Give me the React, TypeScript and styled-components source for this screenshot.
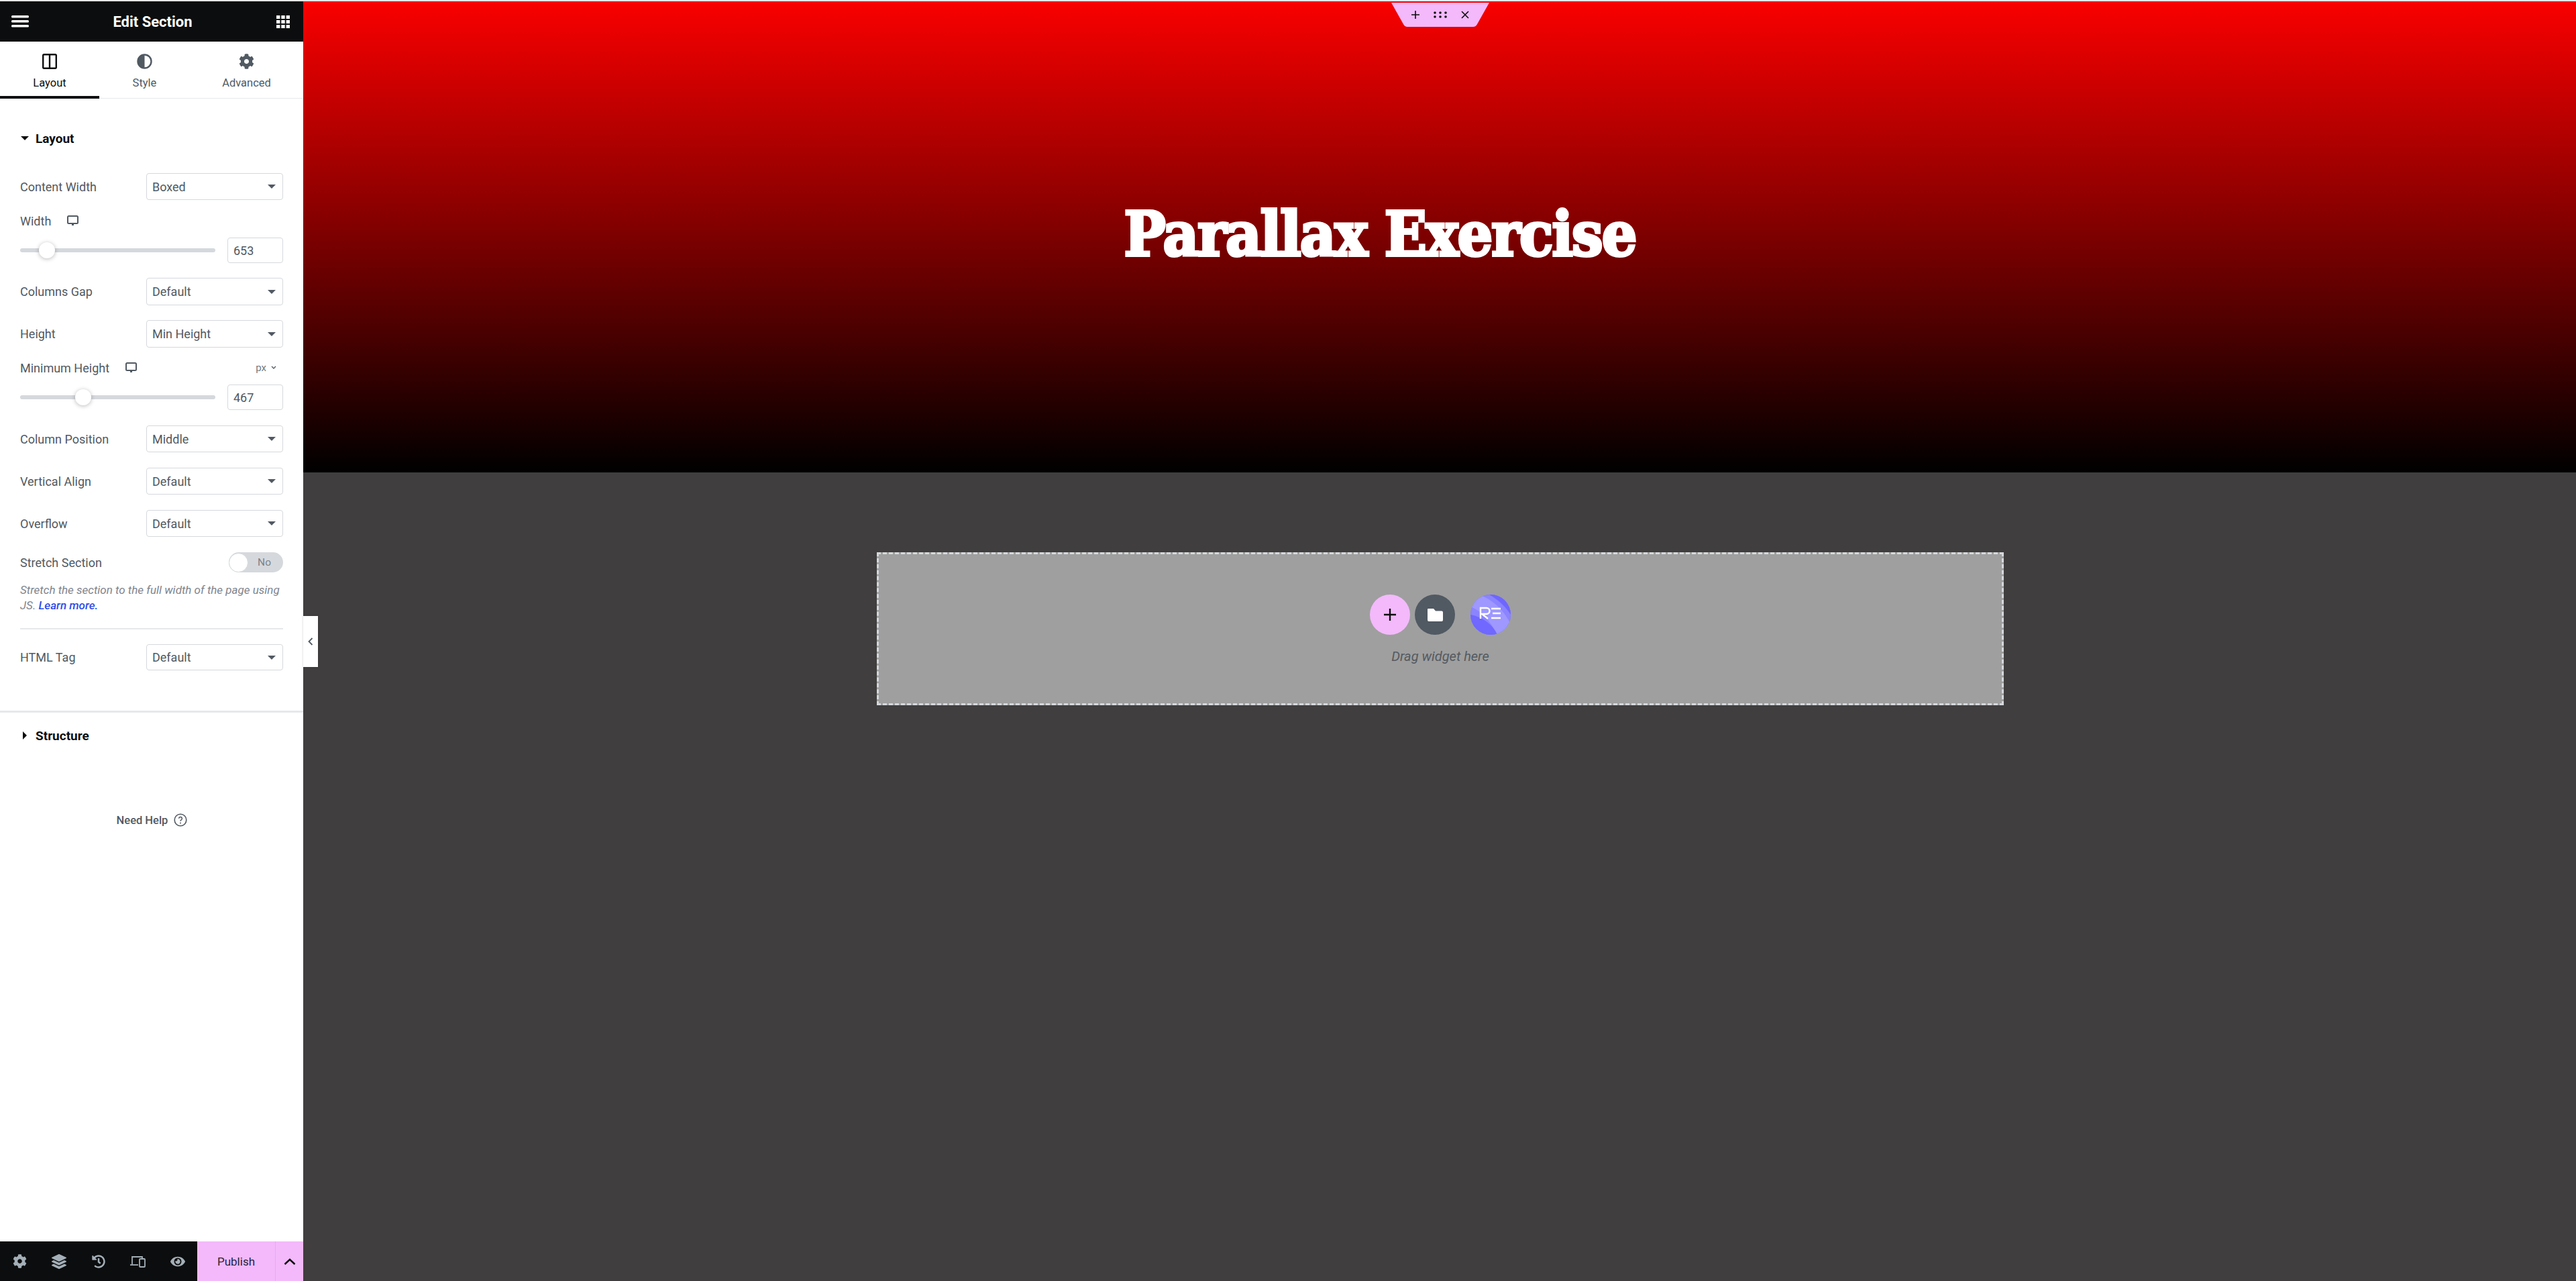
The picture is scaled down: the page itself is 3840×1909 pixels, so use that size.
import React from "react";
import styled, { createGlobalStyle } from "styled-components";
import { FaCog, FaLayerGroup, FaHistory, FaEye } from "react-icons/fa";

const Global = createGlobalStyle`
  html, body { margin: 0; padding: 0; height: 100%; background: #e6e6e6; }
  body { font-family: Roboto, "Liberation Sans", sans-serif; overflow: hidden; }
  #root { height: 100%; }
  * { box-sizing: border-box; }
`;

const Page = styled.div`
  display: flex;
  width: 3840px;
  height: 1909px;
  padding-top: 2px;
`;

const Panel = styled.aside`
  width: 452px;
  flex: none;
  background: #fff;
  display: flex;
  flex-direction: column;
  color: #515962;
`;

const Header = styled.header`
  height: 60px;
  flex: none;
  background: #0c0d0e;
  color: #fff;
  display: flex;
  align-items: center;
  justify-content: space-between;
  padding: 0 20px 0 17px;
`;

const HeaderTitle = styled.h1`
  margin: 0;
  font-size: 22px;
  font-weight: 700;
`;

const Tabs = styled.nav`
  height: 85px;
  flex: none;
  display: flex;
  border-bottom: 1px solid #e6e8ea;
`;

const Tab = styled.div<{ $active?: boolean; $w: number }>`
  width: ${(p) => p.$w}px;
  height: 85px;
  display: flex;
  flex-direction: column;
  align-items: center;
  padding-top: 18px;
  font-size: 16.5px;
  line-height: 20px;
  color: ${(p) => (p.$active ? "#0c0d0e" : "#515962")};
  border-bottom: 4px solid ${(p) => (p.$active ? "#0c0d0e" : "transparent")};
  svg { display: block; margin-bottom: 11px; }
`;

const Body = styled.div`
  flex: 1;
  display: flex;
  flex-direction: column;
`;

const SectionHead = styled.div<{ $top: number }>`
  display: flex;
  align-items: center;
  gap: 10px;
  height: 24px;
  margin: ${(p) => p.$top}px 30px 0 31px;
  font-size: 19px;
  font-weight: 700;
  color: #0c0d0e;
`;

const CaretBox = styled.span`
  width: 12px;
  display: flex;
  justify-content: center;
`;

const CaretDown = styled.i`
  width: 0;
  height: 0;
  border-left: 6px solid transparent;
  border-right: 6px solid transparent;
  border-top: 6px solid #0c0d0e;
`;

const CaretRight = styled.i`
  width: 0;
  height: 0;
  border-top: 6px solid transparent;
  border-bottom: 6px solid transparent;
  border-left: 6px solid #0c0d0e;
`;

const Row = styled.div<{ $top: number; $h: number }>`
  display: flex;
  align-items: center;
  justify-content: space-between;
  height: ${(p) => p.$h}px;
  margin: ${(p) => p.$top}px 30px 0;
  font-size: 18px;
  color: #515962;
`;

const Label = styled.span`
  display: flex;
  align-items: center;
  gap: 24px;
`;

const Select = styled.div`
  position: relative;
  width: 204px;
  height: 100%;
  border: 1px solid #d5d8dc;
  border-radius: 4px;
  display: flex;
  align-items: center;
  padding-left: 8px;
  &::after {
    content: "";
    position: absolute;
    right: 10px;
    top: calc(50% - 3px);
    border-left: 6px solid transparent;
    border-right: 6px solid transparent;
    border-top: 6px solid #515962;
  }
`;

const Track = styled.div`
  position: relative;
  width: 291px;
  height: 6px;
  border-radius: 3px;
  background: #d5d8dc;
`;

const Thumb = styled.div`
  position: absolute;
  top: -9px;
  width: 24px;
  height: 24px;
  border-radius: 50%;
  background: #fff;
  box-shadow: 0 1px 6px rgba(0, 0, 0, 0.28);
`;

const NumberBox = styled.div`
  width: 83px;
  height: 100%;
  border: 1px solid #d5d8dc;
  border-radius: 4px;
  display: flex;
  align-items: center;
  padding-left: 8px;
`;

const Unit = styled.span`
  display: flex;
  align-items: center;
  gap: 7px;
  font-size: 15px;
  color: #717a84;
  margin-right: 10px;
`;

const Toggle = styled.div`
  width: 81px;
  height: 30px;
  border-radius: 15px;
  background: #d5d8dc;
  display: flex;
  align-items: center;
  justify-content: space-between;
  padding-right: 18px;
  font-size: 15.5px;
  color: #7c838c;
`;

const Knob = styled.i`
  width: 29px;
  height: 29px;
  border-radius: 50%;
  background: #fff;
  border: 1px solid #d5d8dc;
`;

const Desc = styled.p`
  margin: 15px 30px 0;
  font-size: 17px;
  line-height: 23px;
  font-style: italic;
  color: #7f858e;
  a { color: #2f4be8; font-weight: 500; text-decoration: none; }
`;

const Rule = styled.hr<{ $top: number; $h: number; $inset: number }>`
  border: 0;
  flex: none;
  height: ${(p) => p.$h}px;
  margin: ${(p) => p.$top}px ${(p) => p.$inset}px 0;
  background: #e6e8ea;
`;

const Help = styled.div`
  margin-top: 102px;
  display: flex;
  align-items: center;
  justify-content: center;
  gap: 9px;
  height: 24px;
  font-size: 16.5px;
  font-weight: 500;
  padding-left: 1px;
`;

const Footer = styled.footer`
  height: 59px;
  flex: none;
  display: flex;
  background: #0c0d0e;
`;

const FootIcons = styled.div`
  width: 294px;
  display: flex;
  align-items: center;
`;

const FootIcon = styled.span`
  width: 58.8px;
  display: flex;
  justify-content: center;
  color: #a4afb7;
`;

const Publish = styled.div`
  width: 117px;
  background: #f3b9fb;
  color: #22253f;
  font-size: 17px;
  display: flex;
  align-items: center;
  justify-content: center;
  border-right: 1px solid #eaa8f3;
`;

const PublishMore = styled.div`
  flex: 1;
  background: #f3b9fb;
  display: flex;
  align-items: center;
  justify-content: center;
`;

const Canvas = styled.main`
  position: relative;
  flex: 1;
  background: #403e3e;
  display: flex;
  flex-direction: column;
`;

const Hero = styled.section`
  height: 702px;
  flex: none;
  background: linear-gradient(180deg, #f90000 0%, #000 100%);
  display: flex;
  align-items: center;
  justify-content: center;
  padding: 0 178px 0 0;
`;

const HeroTitle = styled.h2`
  margin: 0 0 8px;
  color: #fff;
  font-family: "DejaVu Serif Condensed", "DejaVu Serif", serif;
  font-stretch: condensed;
  font-weight: 700;
  font-size: 92px;
  line-height: 1;
  letter-spacing: -1.9px;
  -webkit-text-stroke: 4px #fff;
`;

const SectionTab = styled.div`
  position: absolute;
  top: 2px;
  left: 1622px;
  width: 146px;
  height: 36px;
  display: flex;
  align-items: center;
  justify-content: center;
  gap: 20px;
  color: #0c0d0e;
  svg.bg { position: absolute; inset: 0; }
  svg.ic { position: relative; }
`;

const EmptyBox = styled.section`
  width: 1680px;
  height: 228px;
  margin: 119px 853px 0 855px;
  background: #9f9f9f;
  border: 3px dashed #d5d8dc;
  display: flex;
  flex-direction: column;
  align-items: center;
  padding-top: 60px;
`;

const Buttons = styled.div`
  display: flex;
  align-items: center;
  height: 60px;
`;

const Round = styled.div<{ $bg: string; $gap: number }>`
  width: 60px;
  height: 60px;
  border-radius: 50%;
  background: ${(p) => p.$bg};
  margin-left: ${(p) => p.$gap}px;
  display: flex;
  align-items: center;
  justify-content: center;
  overflow: hidden;
`;

const DragText = styled.div`
  margin-top: 21px;
  font-size: 20px;
  line-height: 22px;
  font-style: italic;
  color: #555a61;
`;

const Collapse = styled.div`
  position: absolute;
  left: 0;
  top: 916px;
  width: 22px;
  height: 76px;
  background: #fff;
  box-shadow: 0 0 3px rgba(0, 0, 0, 0.2);
  display: flex;
  align-items: center;
  justify-content: center;
  color: #515962;
`;

const Desktop = () => (
  <svg width="17" height="16" viewBox="0 0 17 16">
    <rect x="1" y="1" width="15" height="11" rx="1.5" fill="none" stroke="#515962" strokeWidth="2" />
    <rect x="7" y="12" width="3" height="3" fill="#515962" />
  </svg>
);

export default function App() {
  return (
    <Page>
      <Global />
      <Panel>
        <Header>
          <svg width="26" height="18" viewBox="0 0 26 18" fill="#fff">
            <rect y="0" width="26" height="3.4" rx="1.5" />
            <rect y="7" width="26" height="3.4" rx="1.5" />
            <rect y="14" width="26" height="3.4" rx="1.5" />
          </svg>
          <HeaderTitle>Edit Section</HeaderTitle>
          <svg width="20" height="19" viewBox="0 0 20 19" fill="#fff">
            {[0, 7.3, 14.6].map((x) =>
              [0, 7, 14].map((y) => <rect key={`${x}-${y}`} x={x} y={y} width="5.4" height="5" />)
            )}
          </svg>
        </Header>
        <Tabs>
          <Tab $active $w={148}>
            <svg width="22" height="23" viewBox="0 0 22 23">
              <rect x="1.2" y="1.2" width="19.6" height="20.6" rx="1.5" fill="none" stroke="#0c0d0e" strokeWidth="2.4" />
              <rect x="9.8" y="1" width="2.4" height="21" fill="#0c0d0e" />
            </svg>
            Layout
          </Tab>
          <Tab $w={135}>
            <svg width="23" height="23" viewBox="0 0 23 23">
              <circle cx="11.5" cy="11.5" r="10" fill="#fff" stroke="#515962" strokeWidth="2.4" />
              <path d="M11.5 1.5a10 10 0 0 0 0 20z" fill="#515962" />
            </svg>
            Style
          </Tab>
          <Tab $w={169}>
            <FaCog size={23} color="#515962" />
            Advanced
          </Tab>
        </Tabs>
        <Body>
          <SectionHead $top={47}>
            <CaretBox><CaretDown /></CaretBox>Layout
          </SectionHead>
          <Row $top={40} $h={40}><Label>Content Width</Label><Select>Boxed</Select></Row>
          <Row $top={19} $h={24}><Label>Width <Desktop /></Label></Row>
          <Row $top={13} $h={38}>
            <Track><Thumb style={{ left: 28 }} /></Track>
            <NumberBox>653</NumberBox>
          </Row>
          <Row $top={22} $h={41}><Label>Columns Gap</Label><Select>Default</Select></Row>
          <Row $top={22} $h={41}><Label>Height</Label><Select>Min Height</Select></Row>
          <Row $top={18} $h={24}>
            <Label>Minimum Height <Desktop /></Label>
            <Unit>px
              <svg width="8" height="6" viewBox="0 0 8 6"><path d="M1 1l3 3 3-3" fill="none" stroke="#515962" strokeWidth="1.3" /></svg>
            </Unit>
          </Row>
          <Row $top={13} $h={38}>
            <Track><Thumb style={{ left: 82 }} /></Track>
            <NumberBox>467</NumberBox>
          </Row>
          <Row $top={23} $h={40}><Label>Column Position</Label><Select>Middle</Select></Row>
          <Row $top={23} $h={40}><Label>Vertical Align</Label><Select>Default</Select></Row>
          <Row $top={23} $h={40}><Label>Overflow</Label><Select>Default</Select></Row>
          <Row $top={23} $h={30}>
            <Label>Stretch Section</Label>
            <Toggle><Knob />No</Toggle>
          </Row>
          <Desc>Stretch the section to the full width of the page using JS. <a>Learn more.</a></Desc>
          <Rule $top={22} $h={2} $inset={30} />
          <Row $top={22} $h={39}><Label>HTML Tag</Label><Select>Default</Select></Row>
          <Rule $top={60} $h={3} $inset={0} />
          <SectionHead $top={22}>
            <CaretBox><CaretRight /></CaretBox>Structure
          </SectionHead>
          <Help>
            Need Help
            <svg width="20" height="20" viewBox="0 0 20 20">
              <circle cx="10" cy="10" r="8.8" fill="none" stroke="#515962" strokeWidth="1.6" />
              <path d="M7.6 7.8a2.4 2.4 0 1 1 3.6 2.1c-.8.5-1.2.9-1.2 1.8" fill="none" stroke="#515962" strokeWidth="1.5" />
              <circle cx="10" cy="14.4" r="1" fill="#515962" />
            </svg>
          </Help>
        </Body>
        <Footer>
          <FootIcons>
            <FootIcon><FaCog size={21} /></FootIcon>
            <FootIcon><FaLayerGroup size={22} /></FootIcon>
            <FootIcon><FaHistory size={20} /></FootIcon>
            <FootIcon>
              <svg width="23" height="18" viewBox="0 0 23 18" fill="none" stroke="#a4afb7" strokeWidth="1.8">
                <path d="M3 13V2h15v2" />
                <path d="M0 14h12" />
                <rect x="14" y="5" width="8" height="12" rx="1" />
              </svg>
            </FootIcon>
            <FootIcon><FaEye size={22} /></FootIcon>
          </FootIcons>
          <Publish>Publish</Publish>
          <PublishMore>
            <svg width="18" height="10" viewBox="0 0 18 10"><path d="M1.5 9L9 2l7.5 7" fill="none" stroke="#0c0d0e" strokeWidth="2.4" /></svg>
          </PublishMore>
        </Footer>
      </Panel>
      <Canvas>
        <Hero>
          <HeroTitle>Parallax Exercise</HeroTitle>
        </Hero>
        <SectionTab>
          <svg className="bg" width="146" height="36" viewBox="0 0 146 36">
            <path d="M0 0H146L128 32Q126 36 122 36H24Q20 36 18 32Z" fill="#f3b9fb" />
          </svg>
          <svg className="ic" width="14" height="14" viewBox="0 0 14 14"><path d="M7 1v12M1 7h12" stroke="#0c0d0e" strokeWidth="1.6" /></svg>
          <svg className="ic" width="20" height="10" viewBox="0 0 20 10" fill="#0c0d0e">
            {[2, 10, 18].map((x) => [2, 8].map((y) => <circle key={`${x}${y}`} cx={x} cy={y} r="1.8" />))}
          </svg>
          <svg className="ic" width="14" height="14" viewBox="0 0 14 14"><path d="M2 2l10 10M12 2L2 12" stroke="#0c0d0e" strokeWidth="1.6" /></svg>
        </SectionTab>
        <EmptyBox>
          <Buttons>
            <Round $bg="#f3b9fb" $gap={0}>
              <svg width="18" height="18" viewBox="0 0 18 18"><path d="M9 0v18M0 9h18" stroke="#0c0d0e" strokeWidth="2.4" /></svg>
            </Round>
            <Round $bg="#515962" $gap={7}>
              <svg width="23" height="19" viewBox="0 0 23 19"><path d="M1 0h8l3 3.5h9a2 2 0 0 1 2 2V17a2 2 0 0 1-2 2H2a2 2 0 0 1-2-2V1a1 1 0 0 1 1-1z" fill="#fff" /></svg>
            </Round>
            <Round $bg="#7a72ff" $gap={23}>
              <svg width="60" height="60" viewBox="0 0 60 60">
                <rect width="60" height="60" fill="#8b84ff" />
                <path d="M12 0C30 6 48 20 60 44V60H40C30 40 16 24 0 18V0z" fill="#9e98ff" />
                <path d="M28 0C42 8 54 20 60 30V0z" fill="#6f66ff" />
                <path d="M0 30C20 34 34 46 40 60H0z" fill="#7068ff" />
                <path d="M15 36V20h9a4.5 4.5 0 0 1 0 9h-7l9 7" fill="none" stroke="#fff" strokeWidth="2.4" />
                <path d="M31 21h14M33 28h12M31 35h14" fill="none" stroke="#fff" strokeWidth="2.4" />
              </svg>
            </Round>
          </Buttons>
          <DragText>Drag widget here</DragText>
        </EmptyBox>
        <Collapse>
          <svg width="8" height="12" viewBox="0 0 8 12"><path d="M6.5 1L1.5 6l5 5" fill="none" stroke="#515962" strokeWidth="1.8" /></svg>
        </Collapse>
      </Canvas>
    </Page>
  );
}
